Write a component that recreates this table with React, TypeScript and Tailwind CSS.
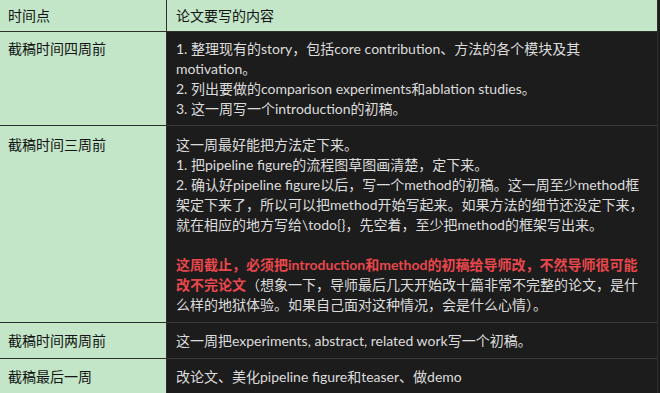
import React from "react";

const font = "font-['Lato','Noto_Sans_CJK_SC',sans-serif]";

type Row = { when: string; body: React.ReactNode; pad: string };

const rows: Row[] = [
  {
    when: "截稿时间四周前",
    pad: "pt-[7px] pb-[6px]",
    body: (
      <>
        1. 整理现有的story，包括core contribution、方法的各个模块及其
        <br />
        motivation。
        <br />
        2. 列出要做的comparison experiments和ablation studies。
        <br />
        3. 这一周写一个introduction的初稿。
      </>
    ),
  },
  {
    when: "截稿时间三周前",
    pad: "pt-[9px] pb-[7px]",
    body: (
      <>
        这一周最好能把方法定下来。
        <br />
        1. 把pipeline figure的流程图草图画清楚，定下来。
        <br />
        2. 确认好pipeline figure以后，写一个method的初稿。这一周至少method框
        <br />
        架定下来了，所以可以把method开始写起来。如果方法的细节还没定下来，
        <br />
        就在相应的地方写给\todo{"{}"}，先空着，至少把method的框架写出来。
        <br />
        <br />
        <span className="font-bold text-[#e8474c]">
          这周截止，必须把introduction和method的初稿给导师改，不然导师很可能
          <br />
          改不完论文
        </span>
        （想象一下，导师最后几天开始改十篇非常不完整的论文，是什
        <br />
        么样的地狱体验。如果自己面对这种情况，会是什么心情）。
      </>
    ),
  },
  {
    when: "截稿时间两周前",
    pad: "pt-[8px] pb-[7px]",
    body: <>这一周把experiments, abstract, related work写一个初稿。</>,
  },
  {
    when: "截稿最后一周",
    pad: "pt-[8px] pb-[6px]",
    body: <>改论文、美化pipeline figure和teaser、做demo</>,
  },
];

export default function App() {
  return (
    <div className={`w-[660px] h-[393px] overflow-hidden bg-[#1c1c1c] ${font} text-[14px] leading-[20px]`}>
      <div className="w-[658px] border-r border-b border-[#2e2e2e]">
        <div className="grid grid-cols-[167px_1fr] bg-[#c2e6c7] text-[#151515] border-b border-[#2e2e2e]">
          <div className="pl-2 pt-[6px] pb-[5px] border-r border-[#2e2e2e]">时间点</div>
          <div className="pl-[9px] pt-[6px] pb-[5px]">论文要写的内容</div>
        </div>
        {rows.map((r, i) => (
          <div
            key={i}
            className={`grid grid-cols-[167px_1fr] ${i < rows.length - 1 ? "border-b border-[#3a3a3a]" : ""}`}
          >
            <div className={`bg-[#c2e6c7] text-[#151515] pl-2 ${r.pad} border-r border-[#2e2e2e] ${i < rows.length - 1 ? "-mb-px border-b border-b-[#2e2e2e]" : ""}`}>
              {r.when}
            </div>
            <div className={`bg-[#1c1c1c] text-[#dcdcdc] pl-[9px] ${r.pad} whitespace-nowrap`}>
              {r.body}
            </div>
          </div>
        ))}
      </div>
    </div>
  );
}
